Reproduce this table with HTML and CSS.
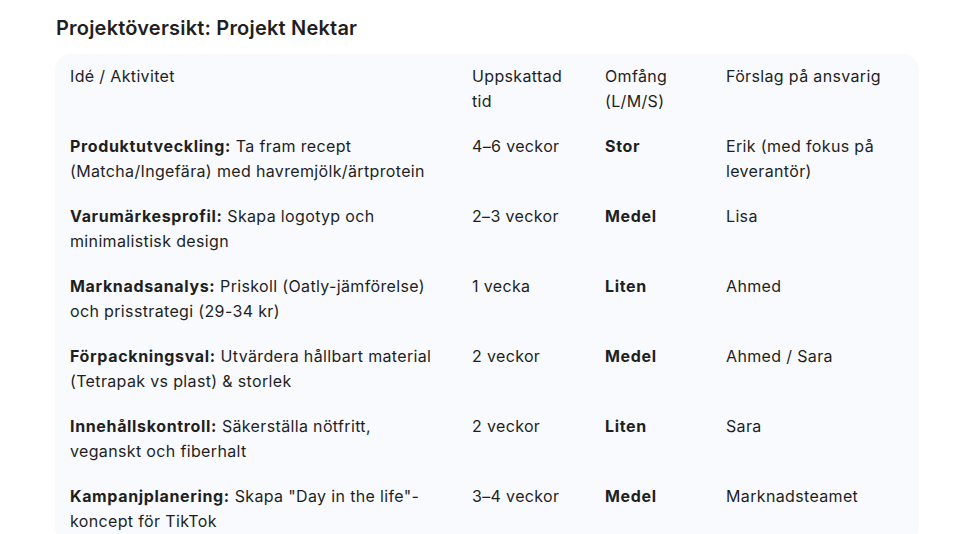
FILE: index.html
```html
<!DOCTYPE html>
<html lang="sv">
<head>
<meta charset="utf-8">
<title>Projektöversikt</title>
<link rel="stylesheet" href="styles.css">
</head>
<body>
<main class="page">
  <h2 class="title">Projektöversikt: Projekt Nektar</h2>
  <div class="table-wrap">
    <table class="table">
      <colgroup>
        <col class="c1"><col class="c2"><col class="c3"><col class="c4">
      </colgroup>
      <thead>
        <tr><th>Idé / Aktivitet</th><th>Uppskattad tid</th><th>Omfång (L/M/S)</th><th>Förslag på ansvarig</th></tr>
      </thead>
      <tbody>
        <tr><td><b>Produktutveckling:</b> Ta fram recept (Matcha/Ingefära) med havremjölk/ärtprotein</td><td>4–6 veckor</td><td><b>Stor</b></td><td>Erik (med fokus på leverantör)</td></tr>
        <tr><td><b>Varumärkesprofil:</b> Skapa logotyp och minimalistisk design</td><td>2–3 veckor</td><td><b>Medel</b></td><td>Lisa</td></tr>
        <tr><td><b>Marknadsanalys:</b> Priskoll (Oatly-jämförelse) och prisstrategi (29-34 kr)</td><td>1 vecka</td><td><b>Liten</b></td><td>Ahmed</td></tr>
        <tr><td><b>Förpackningsval:</b> Utvärdera hållbart material (Tetrapak vs plast) &amp; storlek</td><td>2 veckor</td><td><b>Medel</b></td><td>Ahmed / Sara</td></tr>
        <tr><td><b>Innehållskontroll:</b> Säkerställa nötfritt, veganskt och fiberhalt</td><td>2 veckor</td><td><b>Liten</b></td><td>Sara</td></tr>
        <tr><td><b>Kampanjplanering:</b> Skapa "Day in the life"-koncept för TikTok</td><td>3–4 veckor</td><td><b>Medel</b></td><td>Marknadsteamet</td></tr>
      </tbody>
    </table>
  </div>
</main>
</body>
</html>
```

FILE: styles.css
```css
html, body {
  margin: 0;
  padding: 0;
  background: #ffffff;
}
body {
  font-family: Inter, Roboto, sans-serif;
  color: #1f1f1f;
  overflow: hidden;
}
.page {
  padding: 15px 38px 0 55px;
}
.title {
  margin: 0 0 13px 1px;
  font-size: 20px;
  line-height: 26px;
  font-weight: 600;
  letter-spacing: 0.2px;
}
.table-wrap {
  width: 864px;
  background: #f8fafd;
  border-radius: 16px;
  overflow: hidden;
}
.table {
  width: 864px;
  border-collapse: collapse;
  table-layout: fixed;
  font-size: 16px;
  line-height: 25px;
  letter-spacing: 0.35px;
}
.c1 { width: 402px; }
.c2 { width: 133px; }
.c3 { width: 121px; }
.c4 { width: 208px; }
.table th,
.table td {
  padding: 10px 15px 10px 15px;
  text-align: left;
  vertical-align: top;
  font-weight: 400;
}
.table b {
  font-weight: 700;
  letter-spacing: 0.65px;
}
```
